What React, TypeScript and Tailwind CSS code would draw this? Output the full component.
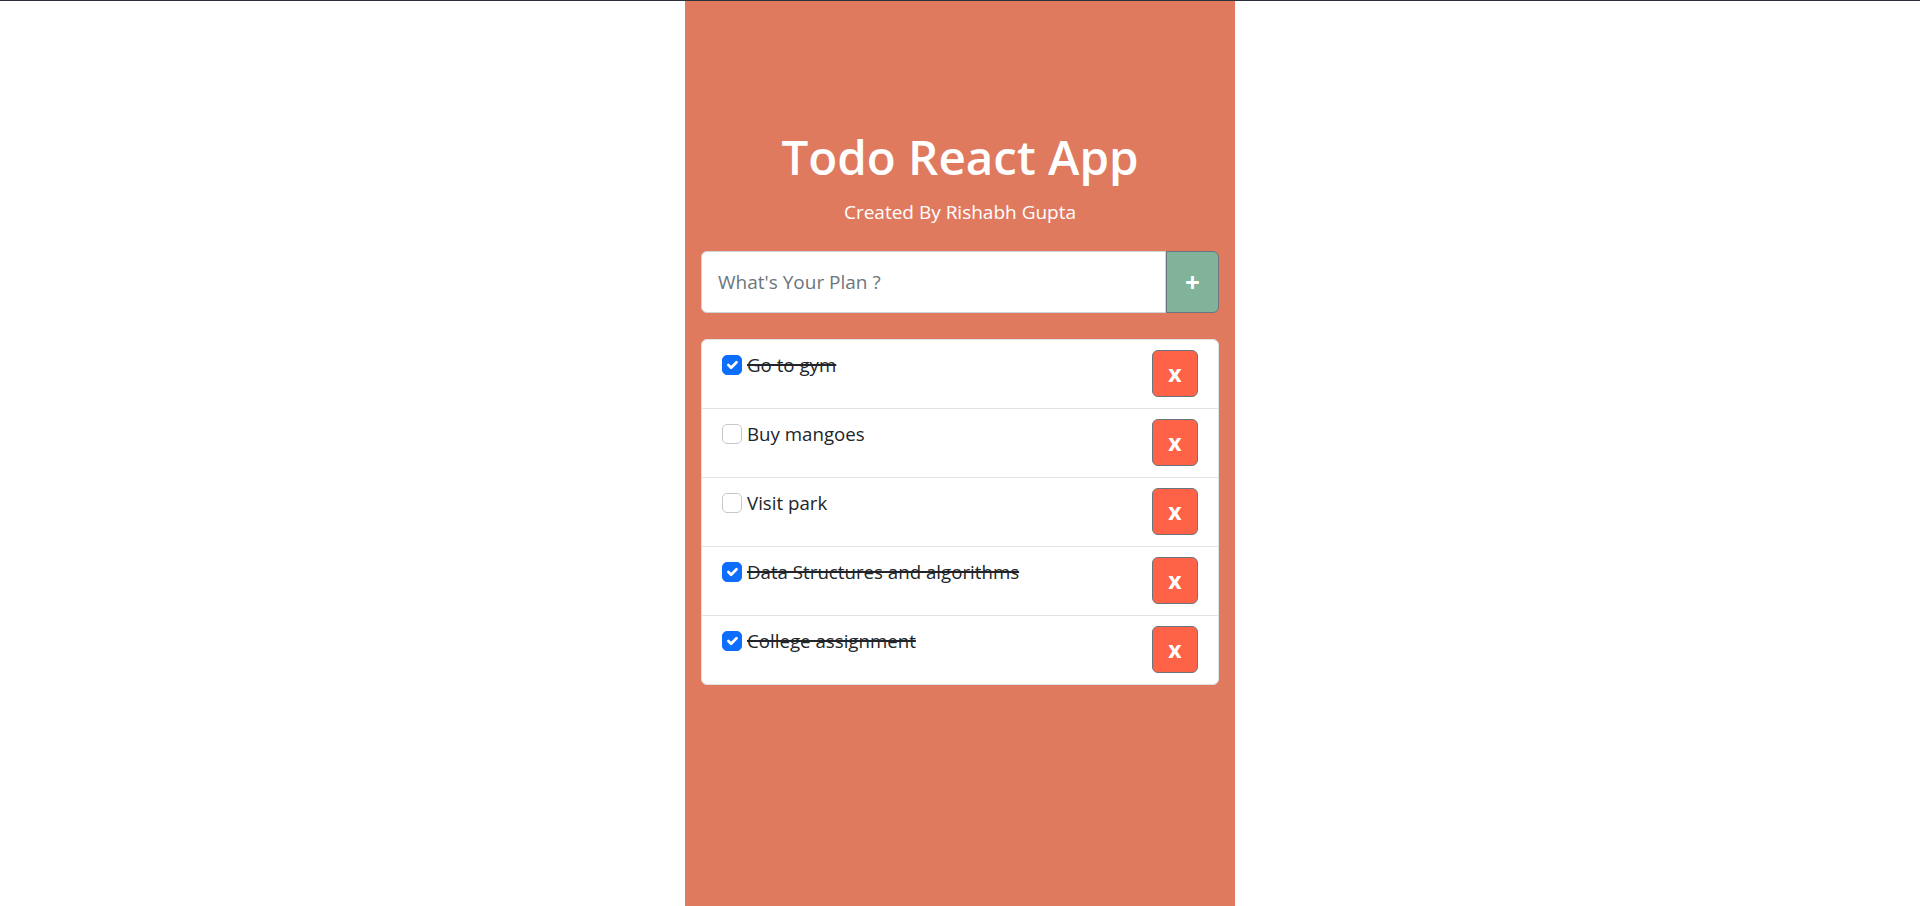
import React, { useState } from 'react'

type Todo = { id: number; text: string; done: boolean }

const startTodos: Todo[] = [
  { id: 1, text: 'Go to gym', done: true },
  { id: 2, text: 'Buy mangoes', done: false },
  { id: 3, text: 'Visit park', done: false },
  { id: 4, text: 'Data Structures and algorithms', done: true },
  { id: 5, text: 'College assignment', done: true },
]

const CheckBox = ({ checked, onClick }: { checked: boolean; onClick: () => void }) => {
  return (
    <span
      onClick={onClick}
      className={
        checked
          ? 'mt-[5px] flex h-5 w-5 shrink-0 items-center justify-center rounded-[5px] border border-[#0d6efd] bg-[#0d6efd] cursor-pointer'
          : 'mt-[5px] flex h-5 w-5 shrink-0 items-center justify-center rounded-[5px] border border-[#c4c7ca] bg-white cursor-pointer'
      }
    >
      {checked && (
        <svg viewBox="0 0 20 20" className="h-[18px] w-[18px]">
          <path d="M6 10l3 3l6-6" fill="none" stroke="#fff" strokeWidth="3" strokeLinecap="round" strokeLinejoin="round" />
        </svg>
      )}
    </span>
  )
}

const App = () => {
  const [todos, setTodos] = useState<Todo[]>(startTodos)
  const [plan, setPlan] = useState('')

  const toggle = (id: number) => {
    setTodos(t => t.map(item => (item.id === id ? { ...item, done: !item.done } : item)))
  }

  const remove = (id: number) => {
    setTodos(t => t.filter(item => item.id !== id))
  }

  const addTodo = () => {
    if (plan.trim() === '') return
    setTodos(t => [...t, { id: Date.now(), text: plan, done: false }])
    setPlan('')
  }

  return (
    <div className="min-h-screen bg-white border-t border-[#2b2f3a] font-['Open_Sans',sans-serif]">
      <div className="mx-auto flex min-h-[905px] w-[550px] flex-col bg-[#e07a5f] px-4 pt-[126px]">
        <h1 className="text-center text-[47.5px] font-semibold leading-[60px] text-white">Todo React App</h1>
        <p className="mt-[11px] text-center text-[19px] leading-[28px] text-white">Created By Rishabh Gupta</p>

        <div className="mt-[25px] flex h-[62px]">
          <input
            value={plan}
            onChange={e => setPlan(e.target.value)}
            placeholder="What's Your Plan ?"
            className="min-w-0 flex-1 rounded-l-[6px] border border-[#ced4da] bg-white px-4 text-[19px] text-[#212529] outline-none placeholder:text-[#6c757d]"
          />
          <button
            onClick={addTodo}
            className="w-[53px] rounded-r-[6px] border border-[#6c757d] bg-[#81b29a] text-[26px] font-bold leading-none text-white"
          >
            +
          </button>
        </div>

        <ul className="mt-[26px] overflow-hidden rounded-[6px] border border-[#dee2e6] bg-white">
          {todos.map(item => (
            <li key={item.id} className="flex items-start justify-between border-b border-[#dee2e6] px-5 pt-[10px] pb-[11px] last:border-b-0">
              <div className="flex items-start gap-[5px]">
                <CheckBox checked={item.done} onClick={() => toggle(item.id)} />
                <span
                  className={
                    item.done
                      ? 'text-[18.7px] leading-[30px] text-[#212529] line-through decoration-2 decoration-[#212529]'
                      : 'text-[18.7px] leading-[30px] text-[#212529]'
                  }
                >
                  {item.text}
                </span>
              </div>
              <button
                onClick={() => remove(item.id)}
                className="flex h-[47px] w-[46px] shrink-0 items-center justify-center rounded-[6px] border border-[#6c757d] bg-[#ff6347] text-[23px] font-bold leading-none text-white"
              >
                x
              </button>
            </li>
          ))}
        </ul>
      </div>
    </div>
  )
}

export default App
